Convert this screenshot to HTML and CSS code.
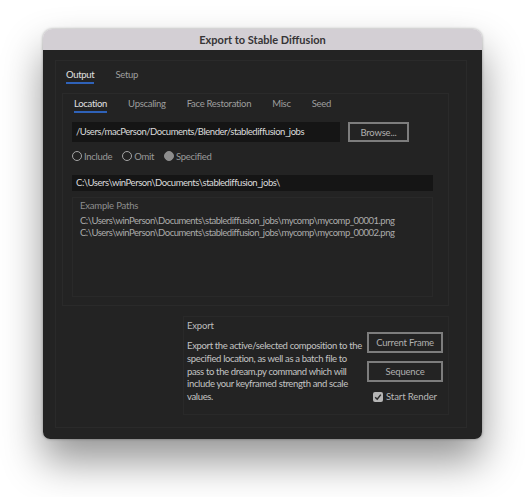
FILE: index.html
```html
<!DOCTYPE html>
<html lang="en">
<head>
    <meta charset="UTF-8">
    <meta name="viewport" content="width=device-width, initial-scale=1.0">
    <title>Export to Stable Diffusion</title>
    <link rel="stylesheet" href="styles.css">
</head>
<body>
    <div class="window">
        <div class="titlebar">Export to Stable Diffusion</div>
        <div class="content">
            <div class="panel outer">
                <div class="tabs">
                    <span class="tab active">Output</span>
                    <span class="tab">Setup</span>
                </div>
                <div class="panel inner">
                    <div class="tabs subtabs">
                        <span class="tab active">Location</span>
                        <span class="tab">Upscaling</span>
                        <span class="tab">Face Restoration</span>
                        <span class="tab">Misc</span>
                        <span class="tab">Seed</span>
                    </div>
                    <div class="row">
                        <div class="field macPath">/Users/macPerson/Documents/Blender/stablediffusion_jobs</div>
                        <button class="btn browseBtn">Browse...</button>
                    </div>
                    <div class="radios">
                        <label class="radio"><span class="dot"></span>Include</label>
                        <label class="radio"><span class="dot"></span>Omit</label>
                        <label class="radio"><span class="dot filled"></span>Specified</label>
                    </div>
                    <div class="field winPath">C:\Users\winPerson\Documents\stablediffusion_jobs\</div>
                    <div class="group examples">
                        <div class="groupTitle">Example Paths</div>
                        <div class="pathLine">C:\Users\winPerson\Documents\stablediffusion_jobs\mycomp\mycomp_00001.png</div>
                        <div class="pathLine">C:\Users\winPerson\Documents\stablediffusion_jobs\mycomp\mycomp_00002.png</div>
                    </div>
                </div>
                <div class="group export">
                    <div class="groupTitle exportTitle">Export</div>
                    <div class="exportBody">
                        <p class="desc">Export the active/selected composition to the specified location, as well as a batch file to pass to the dream.py command which will include your keyframed strength and scale values.</p>
                        <div class="actions">
                            <button class="btn actionBtn">Current Frame</button>
                            <button class="btn actionBtn">Sequence</button>
                            <label class="check">
                                <span class="box">
                                    <svg width="8" height="8" viewBox="0 0 8 8"><path d="M1.2 4.2 L3.2 6.2 L6.8 1.6" fill="none" stroke="#2a2a2a" stroke-width="1.5"/></svg>
                                </span>Start Render
                            </label>
                        </div>
                    </div>
                </div>
            </div>
        </div>
    </div>
</body>
</html>
```

FILE: styles.css
```css
html {
    background: #ffffff;
}
body {
    margin: 0;
    padding: 29px 0 0 43px;
    min-height: 100vh;
    box-sizing: border-box;
    font-family: Lato, "Open Sans", sans-serif;
    font-size: 9.5px;
    letter-spacing: -0.45px;
}
.window {
    width: 439px;
    height: 410px;
    border-radius: 9px 9px 7px 7px;
    overflow: hidden;
    display: flex;
    flex-direction: column;
    box-shadow: 0 22px 40px rgba(0, 0, 0, 0.42), 0 0 3px rgba(0, 0, 0, 0.35);
}
.titlebar {
    height: 21px;
    line-height: 22px;
    background: #d3cfd4;
    color: #363436;
    text-align: center;
    font-weight: bold;
    font-size: 11px;
    letter-spacing: 0;
}
.content {
    flex: 1;
    background: #232323;
    padding: 10px 15px 11px 12px;
    display: flex;
}
.panel {
    border: 1px solid #2a2a2a;
}
.outer {
    flex: 1;
    padding: 7px 0 0 6px;
    display: flex;
    flex-direction: column;
}
.tabs {
    display: flex;
    gap: 21px;
    padding-left: 4px;
    height: 25px;
}
.tab {
    color: #9e9e9e;
    line-height: 13px;
    height: 14px;
    letter-spacing: -0.3px;
}
.tab.active {
    color: #e0e0e0;
    border-bottom: 2px solid #2f62b8;
}
.inner {
    width: 387px;
    height: 213px;
    padding: 3px 0 0 9px;
    box-sizing: border-box;
}
.subtabs {
    padding-left: 2px;
    height: 25px;
}
.row {
    display: flex;
    gap: 8px;
}
.field {
    background: #151515;
    color: #dcdcdc;
    padding-left: 4px;
    box-sizing: border-box;
    white-space: nowrap;
}
.macPath {
    width: 268px;
    height: 20px;
    line-height: 20px;
}
.btn {
    background: #232323;
    border: 2px solid #7d7d7d;
    color: #b0b0b0;
    font-family: inherit;
    font-size: 9.5px;
    letter-spacing: -0.2px;
    padding: 0;
}
.browseBtn {
    width: 61px;
    height: 20px;
}
.radios {
    display: flex;
    gap: 10px;
    height: 16px;
    margin: 6px 0 11px;
    align-items: center;
    color: #9a9a9a;
    letter-spacing: -0.3px;
}
.radio {
    display: flex;
    align-items: center;
    gap: 2px;
}
.dot {
    width: 8px;
    height: 8px;
    border: 1.5px solid #a5a5a5;
    border-radius: 50%;
}
.dot.filled {
    background: #8d8d8d;
    border-color: #8d8d8d;
}
.winPath {
    width: 361px;
    height: 16px;
    line-height: 16px;
}
.group {
    border: 1px solid #292929;
}
.examples {
    margin-top: 6px;
    width: 361px;
    height: 100px;
    box-sizing: border-box;
    padding: 1px 0 0 7px;
    color: #ababab;
}
.groupTitle {
    color: #8e8e8e;
    height: 16px;
    line-height: 14px;
    letter-spacing: -0.2px;
}
.pathLine {
    line-height: 12px;
    letter-spacing: -0.5px;
}
.export {
    margin: 10px 0 0 121px;
    width: 266px;
    height: 99px;
    box-sizing: border-box;
    padding: 2px 5px 0 3px;
}
.exportTitle {
    color: #bdbdbd;
    height: 15px;
}
.exportBody {
    display: flex;
    justify-content: space-between;
}
.desc {
    margin: 6px 0 0;
    width: 178px;
    color: #c4c4c4;
    font-size: 9.5px;
    letter-spacing: -0.35px;
    line-height: 12.8px;
}
.actions {
    display: flex;
    flex-direction: column;
    align-items: center;
    gap: 8px;
    margin-top: -2px;
}
.actionBtn {
    width: 76px;
    height: 21px;
}
.check {
    display: flex;
    align-items: center;
    gap: 3px;
    color: #b8b8b8;
    letter-spacing: -0.1px;
    margin-top: 1px;
}
.box {
    width: 10px;
    height: 10px;
    background: #b5b5b5;
    border-radius: 2px;
    display: flex;
    align-items: center;
    justify-content: center;
}
```
